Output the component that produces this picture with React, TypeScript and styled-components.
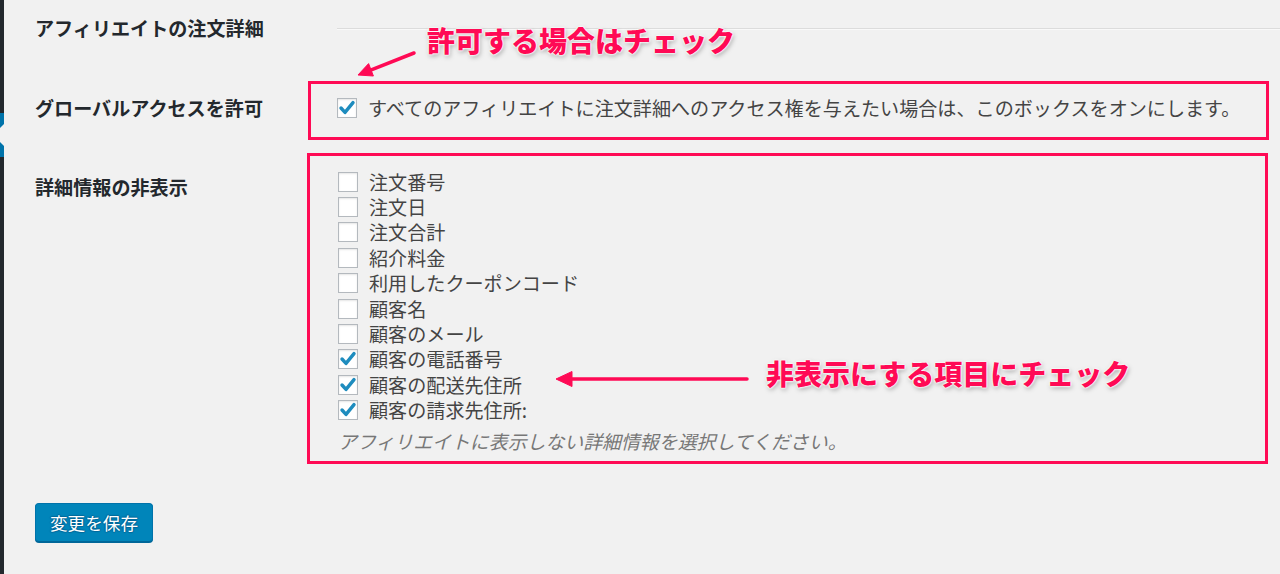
import React from "react";
import styled, { createGlobalStyle } from "styled-components";

const GlobalStyle = createGlobalStyle`
  html, body { margin: 0; padding: 0; background: #f1f1f1; }
  body {
    font-family: "Noto Sans CJK JP", "Noto Sans", sans-serif;
    color: #444;
  }
  * { box-sizing: border-box; }
`;

const RED = "#ff0a55";
const FS = "19.1px";

const Page = styled.div`
  position: relative;
  display: flex;
  min-height: 574px;
  overflow: hidden;
`;

const Sidebar = styled.div`
  width: 4px;
  flex: none;
  background: #23282d;
`;

const ActiveItem = styled.div`
  position: relative;
  margin-top: 113px;
  height: 44px;
  background: #0073aa;
  overflow: hidden;
  &::after {
    content: "";
    position: absolute;
    right: 0;
    top: 50%;
    margin-top: -11px;
    border: 11px solid transparent;
    border-right-color: #f1f1f1;
  }
`;

const Main = styled.div`
  flex: 1;
  padding: 0 30px 0 31px;
`;

const FormRow = styled.div<{ $gap: number }>`
  display: grid;
  grid-template-columns: 273px 1fr;
  margin-top: ${(p) => p.$gap}px;
`;

const RowLabel = styled.div<{ $top: number }>`
  padding-top: ${(p) => p.$top}px;
  font-size: ${FS};
  line-height: 24px;
  font-weight: 700;
  color: #23282d;
  white-space: nowrap;
`;

const HeadingRow = styled.div`
  display: grid;
  grid-template-columns: 273px 1fr;
  height: 56px;
`;

const Divider = styled.div`
  margin: 28px -30px 0 29px;
  height: 2px;
  border-top: 1px solid #dcdcdc;
  border-bottom: 1px solid #f9f9f9;
`;

const Highlight = styled.div<{ $pad: string; $height: number; $shift?: number }>`
  border: 3px solid ${RED};
  padding: ${(p) => p.$pad};
  height: ${(p) => p.$height}px;
  margin-left: ${(p) => p.$shift ?? 0}px;
  margin-right: ${(p) => -(p.$shift ?? 0)}px;
`;

const CheckRow = styled.label<{ $height: number }>`
  display: flex;
  align-items: center;
  gap: 11px;
  height: ${(p) => p.$height}px;
  font-size: ${FS};
  line-height: 24px;
  color: #444;
  white-space: nowrap;
`;

const Box = styled.span`
  width: 20px;
  height: 20px;
  flex: none;
  display: flex;
  align-items: center;
  justify-content: center;
  background: #fff;
  border: 1px solid #b4b9be;
  box-shadow: inset 0 1px 2px rgba(0, 0, 0, 0.1);
`;

const Hint = styled.p`
  margin: 5px 0 0;
  font-size: 18.9px;
  line-height: 26px;
  font-style: italic;
  color: #777;
  white-space: nowrap;
`;

const SaveButton = styled.button`
  margin-top: 39px;
  width: 118px;
  height: 39px;
  padding: 0;
  border: 1px solid #0073aa;
  border-bottom-color: #006799;
  border-radius: 4px;
  background: #0085ba;
  box-shadow: 0 1px 0 #006799;
  color: #fff;
  font-family: "Noto Sans CJK JP", "Noto Sans", sans-serif;
  font-size: 17.6px;
  line-height: 24px;
  text-shadow: 0 -1px 1px #006799, 1px 0 1px #006799, 0 1px 1px #006799, -1px 0 1px #006799;
  cursor: pointer;
`;

const Annotation = styled.div<{ $x: number; $y: number }>`
  position: absolute;
  left: ${(p) => p.$x}px;
  top: ${(p) => p.$y}px;
  font-size: 28px;
  line-height: 36px;
  font-weight: 900;
  color: ${RED};
  white-space: nowrap;
  text-shadow: 0 0 1px #fff, 0 0 2px #fff, 0 0 2px #fff, 0 0 3px #fff,
    1px 2px 5px rgba(0, 0, 0, 0.35);
`;

const ArrowLayer = styled.svg`
  position: absolute;
  left: 0;
  top: 0;
  width: 1280px;
  height: 574px;
  pointer-events: none;
`;

const Check = () => (
  <svg width="18" height="18" viewBox="0 0 18 18">
    <path
      d="M3 9 L7 13.4 L15 3.6"
      fill="none"
      stroke="#1e8cbe"
      strokeWidth="3.4"
      strokeLinecap="round"
      strokeLinejoin="round"
    />
  </svg>
);

const Checkbox = ({ checked }: { checked?: boolean }) => (
  <Box>{checked ? <Check /> : null}</Box>
);

const items: { label: string; checked: boolean }[] = [
  { label: "注文番号", checked: false },
  { label: "注文日", checked: false },
  { label: "注文合計", checked: false },
  { label: "紹介料金", checked: false },
  { label: "利用したクーポンコード", checked: false },
  { label: "顧客名", checked: false },
  { label: "顧客のメール", checked: false },
  { label: "顧客の電話番号", checked: true },
  { label: "顧客の配送先住所", checked: true },
  { label: "顧客の請求先住所:", checked: true },
];

export default function App() {
  return (
    <>
      <GlobalStyle />
      <Page>
        <Sidebar>
          <ActiveItem />
        </Sidebar>
        <Main>
          <HeadingRow>
            <RowLabel $top={16}>アフィリエイトの注文詳細</RowLabel>
            <Divider />
          </HeadingRow>

          <FormRow $gap={25}>
            <RowLabel $top={15}>グローバルアクセスを許可</RowLabel>
            <Highlight $pad="11px 26px 0" $height={59}>
              <CheckRow $height={26}>
                <Checkbox checked />
                すべてのアフィリエイトに注文詳細へのアクセス権を与えたい場合は、このボックスをオンにします。
              </CheckRow>
            </Highlight>
          </FormRow>

          <FormRow $gap={13}>
            <RowLabel $top={22}>詳細情報の非表示</RowLabel>
            <Highlight $pad="13px 26px 0 28px" $height={311} $shift={-1}>
              {items.map((it) => (
                <CheckRow key={it.label} $height={25.4}>
                  <Checkbox checked={it.checked} />
                  {it.label}
                </CheckRow>
              ))}
              <Hint>アフィリエイトに表示しない詳細情報を選択してください。</Hint>
            </Highlight>
          </FormRow>

          <SaveButton type="button">変更を保存</SaveButton>
        </Main>

        <Annotation $x={427} $y={22}>許可する場合はチェック</Annotation>
        <Annotation $x={766} $y={355}>非表示にする項目にチェック</Annotation>

        <ArrowLayer viewBox="0 0 1280 574">
          <line x1="414" y1="53" x2="370" y2="70.3" stroke={RED} strokeWidth="3.5" strokeLinecap="round" />
          <polygon points="358,75 373.4,76 368.6,63.6" fill={RED} stroke={RED} strokeWidth="1" strokeLinejoin="round" />
          <line x1="747" y1="379" x2="570" y2="379" stroke={RED} strokeWidth="3.5" strokeLinecap="round" />
          <polygon points="556,379 572,371.5 572,386.5" fill={RED} stroke={RED} strokeWidth="1" strokeLinejoin="round" />
        </ArrowLayer>
      </Page>
    </>
  );
}
